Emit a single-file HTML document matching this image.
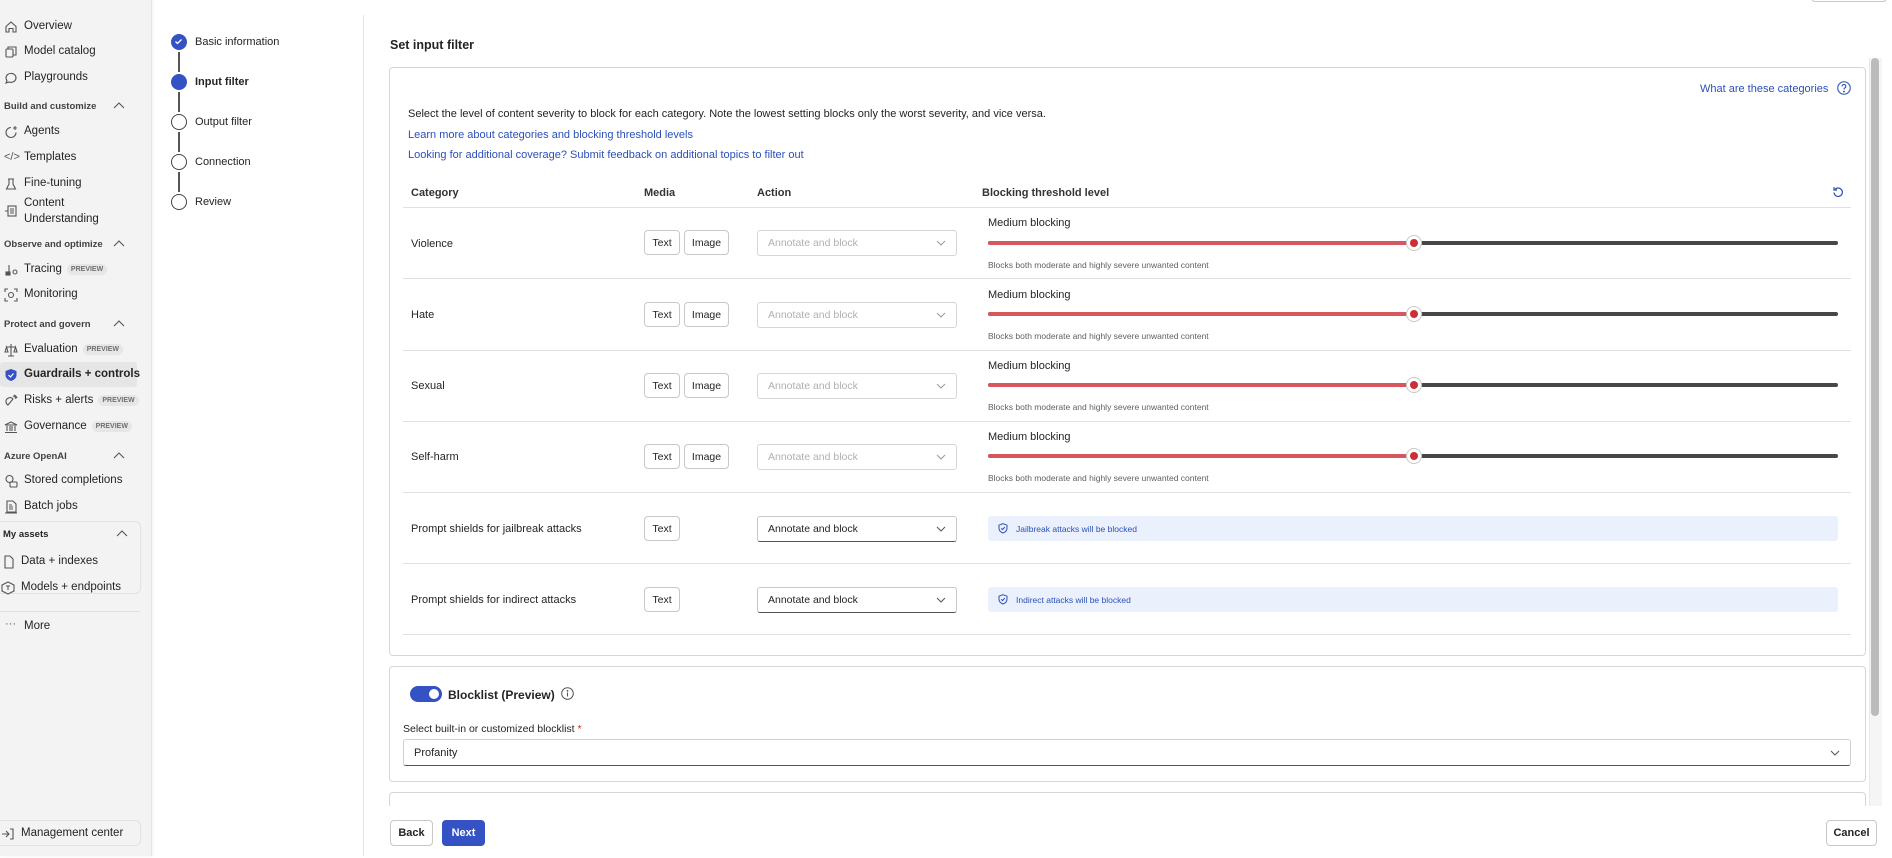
<!DOCTYPE html>
<html><head><meta charset="utf-8"><style>
*{box-sizing:border-box;margin:0;padding:0}
body{width:1892px;height:856px;overflow:hidden;background:#fff;font-family:"Liberation Sans",sans-serif;color:#242424;position:relative}
.a{position:absolute;white-space:nowrap}
#side{position:absolute;left:0;top:0;width:152px;height:856px;background:#f3f3f3;border-right:1px solid #e6e6e6;box-shadow:1px 0 3px rgba(0,0,0,.06)}
#side .m{position:absolute;left:0;top:2px;width:152px;height:856px}
.ni{position:absolute;left:24px;font-size:11.5px;color:#242424}
.ic{position:absolute;left:4px;width:14px;height:14px}
.sh{position:absolute;left:4px;font-size:9.5px;font-weight:bold;color:#424242}
.chev{position:absolute;left:113px;width:12px;height:8px}
.pv{display:inline-block;font-size:7px;font-weight:bold;color:#707070;background:#e6e6e6;border-radius:6px;padding:2px 4px;margin-left:5px;vertical-align:1px}
.st{position:absolute;left:171px;width:16px;height:16px;border-radius:50%;border:1.5px solid #444;background:#fff}
.sl{position:absolute;left:195px;font-size:11px;color:#242424}
.vl{position:absolute;left:178px;width:2px;height:20px;background:#555}
.link{color:#2b50b8}
.btn{position:absolute;height:25px;border:1px solid #c8c8c8;border-radius:4px;font-size:10.5px;display:flex;align-items:center;justify-content:center;background:#fff}
.dd{position:absolute;left:757px;width:200px;height:26px;border:1px solid #d6d6d6;border-radius:3px;font-size:10.5px;color:#b0b0b0;padding-left:10px;display:flex;align-items:center}
.dd svg{position:absolute;right:10px;top:9px}
.dd.on{color:#242424;border-color:#c8c8c8;border-bottom:1.5px solid #555}
.hr{position:absolute;left:403px;width:1448px;height:1px;background:#e0e0e0}
.cat{position:absolute;left:411px;font-size:11px}
.ml{position:absolute;left:988px;font-size:11px}
.cap{position:absolute;left:988px;font-size:8.5px;color:#616161}
.tr{position:absolute;left:988px;width:850px;height:4px;background:#474747;border-radius:2px}
.tr i{position:absolute;left:0;top:0;width:426px;height:4px;background:#d6585e;border-radius:2px}
.th{position:absolute;width:16px;height:16px;border-radius:50%;background:#fff;border:1px solid #c8c8c8;left:1406px}
.th b{position:absolute;left:3px;top:3px;width:8px;height:8px;border-radius:50%;background:#cc2f35}
.info{position:absolute;left:988px;width:850px;height:25px;background:#ebf1fc;border-radius:3px;font-size:8.5px;color:#2b50b8;display:flex;align-items:center;padding-left:10px}
.info svg{margin-right:8px}
</style></head><body>

<div id="side"><div class="m">
 <svg class="ic" style="top:18px" viewBox="0 0 14 14" fill="none" stroke="#555" stroke-width="1.1"><path d="M2 6.5L7 2l5 4.5V12H9V8.5H5V12H2z"/></svg>
 <div class="ni" style="top:18px">Overview</div>
 <svg class="ic" style="top:43px" viewBox="0 0 14 14" fill="none" stroke="#555" stroke-width="1.1"><rect x="2" y="4" width="7" height="8" rx="1"/><path d="M4 4V2h8v8h-3"/></svg>
 <div class="ni" style="top:43px">Model catalog</div>
 <svg class="ic" style="top:69px" viewBox="0 0 14 14" fill="none" stroke="#555" stroke-width="1.1"><path d="M2 7a5 4.5 0 1 1 3 4l-3 1 1-2.5A4.5 4 0 0 1 2 7z"/></svg>
 <div class="ni" style="top:69px">Playgrounds</div>
 <div class="sh" style="top:99px">Build and customize</div>
 <svg class="chev" style="top:100px" viewBox="0 0 12 8" fill="none" stroke="#555" stroke-width="1.1"><path d="M1 6l5-5 5 5"/></svg>
 <svg class="ic" style="top:123px" viewBox="0 0 14 14" fill="none" stroke="#555" stroke-width="1.1"><path d="M7 2.5A5 5 0 1 0 12 7.5"/><path d="M11 1v4M9 3h4"/></svg>
 <div class="ni" style="top:123px">Agents</div>
 <div class="a" style="left:4px;top:149px;font-size:11px;color:#555">&lt;/&gt;</div>
 <div class="ni" style="top:149px">Templates</div>
 <svg class="ic" style="top:175px" viewBox="0 0 14 14" fill="none" stroke="#555" stroke-width="1.1"><path d="M4 2h6M5 2v5l-2.5 5h9L9 7V2"/></svg>
 <div class="ni" style="top:175px">Fine-tuning</div>
 <svg class="ic" style="top:202px" viewBox="0 0 14 14" fill="none" stroke="#555" stroke-width="1.1"><rect x="4" y="2" width="8" height="10"/><path d="M6 5h4M6 7h4M6 9h4M1 7h3"/></svg>
 <div class="ni" style="top:195px">Content</div>
 <div class="ni" style="top:211px">Understanding</div>
 <div class="sh" style="top:237px">Observe and optimize</div>
 <svg class="chev" style="top:238px" viewBox="0 0 12 8" fill="none" stroke="#555" stroke-width="1.1"><path d="M1 6l5-5 5 5"/></svg>
 <svg class="ic" style="top:261px" viewBox="0 0 14 14" fill="none" stroke="#555" stroke-width="1.1"><circle cx="11" cy="9" r="2"/><path d="M5 2v7"/><rect x="2" y="9" width="4" height="3" fill="#555"/></svg>
 <div class="ni" style="top:261px">Tracing<span class="pv">PREVIEW</span></div>
 <svg class="ic" style="top:286px" viewBox="0 0 14 14" fill="none" stroke="#555" stroke-width="1.1"><path d="M1 4V1h3M10 1h3v3M13 10v3h-3M4 13H1v-3"/><circle cx="7" cy="7" r="2.5"/></svg>
 <div class="ni" style="top:286px">Monitoring</div>
 <div class="sh" style="top:317px">Protect and govern</div>
 <svg class="chev" style="top:318px" viewBox="0 0 12 8" fill="none" stroke="#555" stroke-width="1.1"><path d="M1 6l5-5 5 5"/></svg>
 <svg class="ic" style="top:341px" viewBox="0 0 14 14" fill="none" stroke="#555" stroke-width="1.1"><path d="M7 1v12M2 4h10M1 9l1.5-5L4 9zM10 9l1.5-5L13 9zM4 13h6"/></svg>
 <div class="ni" style="top:341px">Evaluation<span class="pv">PREVIEW</span></div>
 <div class="a" style="left:0;top:360px;width:137px;height:25px;background:#e6e6e6;border-radius:3px"></div>
 <svg class="ic" style="top:366px" viewBox="0 0 14 14"><path d="M7 1l5.5 2v4c0 3-2.5 5-5.5 6C4 12 1.5 10 1.5 7V3z" fill="#3552c4"/><path d="M4.5 7l2 2 3-3.5" stroke="#fff" stroke-width="1.2" fill="none"/></svg>
 <div class="ni" style="top:366px;font-weight:bold">Guardrails + controls</div>
 <svg class="ic" style="top:392px" viewBox="0 0 14 14" fill="none" stroke="#555" stroke-width="1.1"><path d="M2 8a4 4 0 0 1 7-3l-5 6A4 4 0 0 1 2 8zM9 2a4 4 0 0 1 3 3M10 1a5 5 0 0 1 3 3"/></svg>
 <div class="ni" style="top:392px">Risks + alerts<span class="pv">PREVIEW</span></div>
 <svg class="ic" style="top:418px" viewBox="0 0 14 14" fill="none" stroke="#555" stroke-width="1.1"><path d="M1 5l6-3 6 3zM3 6v5M6 6v5M8 6v5M11 6v5M1 12.5h12"/></svg>
 <div class="ni" style="top:418px">Governance<span class="pv">PREVIEW</span></div>
 <div class="sh" style="top:449px">Azure OpenAI</div>
 <svg class="chev" style="top:450px" viewBox="0 0 12 8" fill="none" stroke="#555" stroke-width="1.1"><path d="M1 6l5-5 5 5"/></svg>
 <svg class="ic" style="top:472px" viewBox="0 0 14 14" fill="none" stroke="#555" stroke-width="1.1"><circle cx="5.5" cy="5" r="3.5"/><rect x="6" y="8" width="7" height="5" rx="1"/></svg>
 <div class="ni" style="top:472px">Stored completions</div>
 <svg class="ic" style="top:498px" viewBox="0 0 14 14" fill="none" stroke="#555" stroke-width="1.1"><path d="M3 1h6l3 3v8H3zM1 13h12M5 5h3M5 7h4M5 9h4"/></svg>
 <div class="ni" style="top:498px">Batch jobs</div>
 <div class="a" style="left:0;top:519px;width:141px;height:73px;border:1px solid #e2e2e2;border-left:none;border-radius:0 6px 6px 0"></div>
 <div class="sh" style="top:527px;left:3px;color:#242424">My assets</div>
 <svg class="chev" style="top:528px;left:116px" viewBox="0 0 12 8" fill="none" stroke="#555" stroke-width="1.1"><path d="M1 6l5-5 5 5"/></svg>
 <svg class="ic" style="top:553px;left:2px" viewBox="0 0 14 14" fill="none" stroke="#555" stroke-width="1.1"><path d="M3 1h5l3 3v9H3z"/></svg>
 <div class="ni" style="top:553px;left:21px">Data + indexes</div>
 <svg class="ic" style="top:579px;left:1px" viewBox="0 0 14 14" fill="none" stroke="#555" stroke-width="1.1"><path d="M7 1l6 3v6l-6 3-6-3V4z"/><path d="M5 5h4M7 5v4"/></svg>
 <div class="ni" style="top:579px;left:21px">Models + endpoints</div>
 <div class="a" style="left:0;top:609px;width:140px;height:1px;background:#e0e0e0"></div>
 <div class="a" style="left:5px;top:616px;font-size:11px;color:#555">···</div>
 <div class="ni" style="top:618px">More</div>
 <div class="a" style="left:0;top:818px;width:141px;height:26px;border:1px solid #e2e2e2;border-left:none;border-radius:0 6px 6px 0"></div>
 <svg class="ic" style="top:825px;left:1px" viewBox="0 0 14 14" fill="none" stroke="#555" stroke-width="1.1"><path d="M1 7h7M5 4l3 3-3 3M9 2h3v10H9"/></svg>
 <div class="ni" style="top:825px;left:21px">Management center</div>
</div></div>

<!-- stepper -->
<div class="a" style="left:363px;top:15px;width:1px;height:841px;background:#e4e4e4"></div>
<div class="st" style="top:34px;background:#3552c4;border-color:#3552c4"><svg width="13" height="13" viewBox="0 0 13 13" style="position:absolute;left:0;top:0"><path d="M3.5 6.5l2 2 4-4" stroke="#fff" stroke-width="1.3" fill="none"/></svg></div>
<div class="sl" style="top:36px">Basic information</div>
<div class="vl" style="top:52px"></div>
<div class="st" style="top:74px;background:#3552c4;border-color:#3552c4"></div>
<div class="sl" style="top:76px;font-weight:bold">Input filter</div>
<div class="vl" style="top:92px"></div>
<div class="st" style="top:114px"></div>
<div class="sl" style="top:116px">Output filter</div>
<div class="vl" style="top:132px"></div>
<div class="st" style="top:154px"></div>
<div class="sl" style="top:156px">Connection</div>
<div class="vl" style="top:172px"></div>
<div class="st" style="top:194px"></div>
<div class="sl" style="top:196px">Review</div>

<!-- top cut -->
<div class="a" style="left:390px;top:-14px;font-size:16px;font-weight:bold">Create filter</div>
<div class="a" style="left:1811px;top:-10px;width:76px;height:12px;border:1px solid #c8c8c8;border-radius:4px"></div>

<div class="a" style="left:390px;top:38px;font-size:12.5px;font-weight:bold">Set input filter</div>

<!-- card -->
<div class="a" style="left:389px;top:67px;width:1477px;height:589px;border:1px solid #d6d6d6;border-radius:4px"></div>
<div class="a link" style="left:1700px;top:83px;font-size:11px">What are these categories</div>
<svg class="a" style="left:1837px;top:81px" width="14" height="14" viewBox="0 0 13 13" fill="none" stroke="#2b50b8" stroke-width="1"><circle cx="6.5" cy="6.5" r="5.8"/><path d="M4.8 5a1.7 1.7 0 1 1 2.4 1.5c-.6.3-.7.7-.7 1.3"/><circle cx="6.5" cy="9.8" r=".4" fill="#2b50b8"/></svg>
<div class="a" style="left:408px;top:108px;font-size:11px">Select the level of content severity to block for each category. Note the lowest setting blocks only the worst severity, and vice versa.</div>
<div class="a link" style="left:408px;top:129px;font-size:11px">Learn more about categories and blocking threshold levels</div>
<div class="a link" style="left:408px;top:149px;font-size:11px">Looking for additional coverage? Submit feedback on additional topics to filter out</div>

<div class="a" style="left:411px;top:187px;font-size:11px;font-weight:bold;color:#333">Category</div>
<div class="a" style="left:644px;top:187px;font-size:11px;font-weight:bold;color:#333">Media</div>
<div class="a" style="left:757px;top:187px;font-size:11px;font-weight:bold;color:#333">Action</div>
<div class="a" style="left:982px;top:187px;font-size:11px;font-weight:bold;color:#333">Blocking threshold level</div>
<svg class="a" style="left:1832px;top:186px" width="12" height="13" viewBox="0 0 12 13" fill="none" stroke="#2b50b8" stroke-width="1.2"><path d="M3 3.5a4.2 4.2 0 1 1-1 3"/><path d="M2 1v3h3"/></svg>
<div class="hr" style="top:207px"></div>

<!-- rows -->
<div class="cat" style="top:238px">Violence</div>
<div class="btn" style="left:644px;top:230px;width:36px">Text</div><div class="btn" style="left:684px;top:230px;width:45px">Image</div>
<div class="dd" style="top:230px">Annotate and block<svg width="10" height="6" viewBox="0 0 10 6" fill="none" stroke="#999"><path d="M1 1l4 4 4-4"/></svg></div>
<div class="ml" style="top:217px">Medium blocking</div>
<div class="tr" style="top:241px"><i></i></div><div class="th" style="top:235px"><b></b></div>
<div class="cap" style="top:260px">Blocks both moderate and highly severe unwanted content</div>
<div class="hr" style="top:278px"></div>

<div class="cat" style="top:309px">Hate</div>
<div class="btn" style="left:644px;top:302px;width:36px">Text</div><div class="btn" style="left:684px;top:302px;width:45px">Image</div>
<div class="dd" style="top:302px">Annotate and block<svg width="10" height="6" viewBox="0 0 10 6" fill="none" stroke="#999"><path d="M1 1l4 4 4-4"/></svg></div>
<div class="ml" style="top:289px">Medium blocking</div>
<div class="tr" style="top:312px"><i></i></div><div class="th" style="top:306px"><b></b></div>
<div class="cap" style="top:331px">Blocks both moderate and highly severe unwanted content</div>
<div class="hr" style="top:350px"></div>

<div class="cat" style="top:380px">Sexual</div>
<div class="btn" style="left:644px;top:373px;width:36px">Text</div><div class="btn" style="left:684px;top:373px;width:45px">Image</div>
<div class="dd" style="top:373px">Annotate and block<svg width="10" height="6" viewBox="0 0 10 6" fill="none" stroke="#999"><path d="M1 1l4 4 4-4"/></svg></div>
<div class="ml" style="top:360px">Medium blocking</div>
<div class="tr" style="top:383px"><i></i></div><div class="th" style="top:377px"><b></b></div>
<div class="cap" style="top:402px">Blocks both moderate and highly severe unwanted content</div>
<div class="hr" style="top:421px"></div>

<div class="cat" style="top:451px">Self-harm</div>
<div class="btn" style="left:644px;top:444px;width:36px">Text</div><div class="btn" style="left:684px;top:444px;width:45px">Image</div>
<div class="dd" style="top:444px">Annotate and block<svg width="10" height="6" viewBox="0 0 10 6" fill="none" stroke="#999"><path d="M1 1l4 4 4-4"/></svg></div>
<div class="ml" style="top:431px">Medium blocking</div>
<div class="tr" style="top:454px"><i></i></div><div class="th" style="top:448px"><b></b></div>
<div class="cap" style="top:473px">Blocks both moderate and highly severe unwanted content</div>
<div class="hr" style="top:492px"></div>

<div class="cat" style="top:523px">Prompt shields for jailbreak attacks</div>
<div class="btn" style="left:644px;top:516px;width:36px">Text</div>
<div class="dd on" style="top:516px">Annotate and block<svg width="10" height="6" viewBox="0 0 10 6" fill="none" stroke="#555"><path d="M1 1l4 4 4-4"/></svg></div>
<div class="info" style="top:516px"><svg width="10" height="11" viewBox="0 0 10 11" fill="none" stroke="#2b50b8"><path d="M5 .7l4 1.5v3c0 2.5-2 4-4 4.8C3 9.2 1 7.7 1 5.2v-3z"/><path d="M3.2 5.3l1.3 1.3 2.3-2.5"/></svg>Jailbreak attacks will be blocked</div>
<div class="hr" style="top:563px"></div>

<div class="cat" style="top:594px">Prompt shields for indirect attacks</div>
<div class="btn" style="left:644px;top:587px;width:36px">Text</div>
<div class="dd on" style="top:587px">Annotate and block<svg width="10" height="6" viewBox="0 0 10 6" fill="none" stroke="#555"><path d="M1 1l4 4 4-4"/></svg></div>
<div class="info" style="top:587px"><svg width="10" height="11" viewBox="0 0 10 11" fill="none" stroke="#2b50b8"><path d="M5 .7l4 1.5v3c0 2.5-2 4-4 4.8C3 9.2 1 7.7 1 5.2v-3z"/><path d="M3.2 5.3l1.3 1.3 2.3-2.5"/></svg>Indirect attacks will be blocked</div>
<div class="hr" style="top:634px"></div>

<!-- blocklist card -->
<div class="a" style="left:389px;top:666px;width:1477px;height:116px;border:1px solid #d6d6d6;border-radius:4px"></div>
<div class="a" style="left:410px;top:686px;width:32px;height:16px;border-radius:8px;background:#3552c4"><div style="position:absolute;right:3px;top:3px;width:10px;height:10px;border-radius:50%;background:#fff"></div></div>
<div class="a" style="left:448px;top:688px;font-size:12px;font-weight:bold">Blocklist (Preview)</div>
<svg class="a" style="left:561px;top:687px" width="13" height="13" viewBox="0 0 13 13" fill="none" stroke="#555" stroke-width="1"><circle cx="6.5" cy="6.5" r="5.8"/><path d="M6.5 5.5v4"/><circle cx="6.5" cy="3.8" r=".4" fill="#555"/></svg>
<div class="a" style="left:403px;top:723px;font-size:10.5px">Select built-in or customized blocklist <span style="color:#c4262b">*</span></div>
<div class="a" style="left:403px;top:739px;width:1448px;height:27px;border:1px solid #d0d0d0;border-bottom:1.5px solid #555;border-radius:3px"></div>
<div class="a" style="left:414px;top:747px;font-size:11px">Profanity</div>
<svg class="a" style="left:1830px;top:750px" width="10" height="6" viewBox="0 0 10 6" fill="none" stroke="#555"><path d="M1 1l4 4 4-4"/></svg>

<div class="a" style="left:389px;top:792px;width:1477px;height:30px;border:1px solid #d6d6d6;border-bottom:none;border-radius:4px 4px 0 0"></div>
<div class="a" style="left:370px;top:806px;width:1520px;height:50px;background:#fff"></div>

<!-- scrollbar -->
<div class="a" style="left:1869px;top:58px;width:13px;height:748px;background:#f5f5f5;border-left:1px solid #e8e8e8"></div>
<div class="a" style="left:1871px;top:58px;width:8px;height:658px;background:#bbb;border-radius:4px"></div>

<!-- footer -->
<div class="btn" style="left:390px;top:820px;width:43px;height:26px;font-weight:bold;font-size:11px">Back</div>
<div class="btn" style="left:442px;top:820px;width:43px;height:26px;font-weight:bold;font-size:11px;background:#3552c4;border-color:#3552c4;color:#fff">Next</div>
<div class="btn" style="left:1826px;top:820px;width:51px;height:26px;font-weight:bold;font-size:11px">Cancel</div>
</body></html>
